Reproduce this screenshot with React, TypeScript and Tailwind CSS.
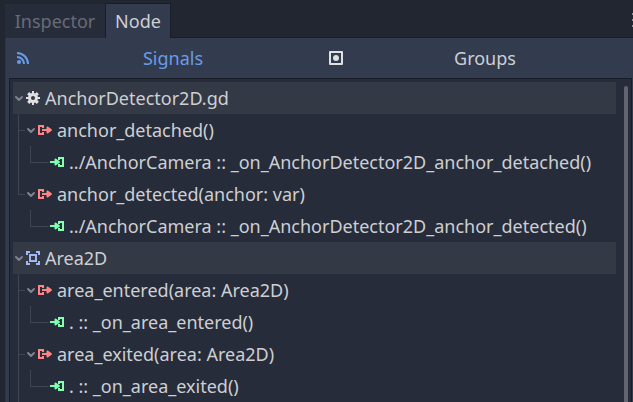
import React from "react";

const SignalsIcon = () => (
  <svg viewBox="0 0 16 16" className="size-4 shrink-0" fill="none" stroke="#699ce8" strokeWidth="2" aria-hidden="true">
    <circle cx="3" cy="12" r="2" fill="#699ce8" stroke="none" />
    <path d="M1 3a11 11 0 0 1 11 11" />
    <path d="M1 7a7 7 0 0 1 7 7" />
  </svg>
);

const GroupsIcon = () => (
  <svg viewBox="0 0 16 16" className="size-4 shrink-0" aria-hidden="true">
    <rect x="2" y="2" width="12" height="12" fill="none" stroke="#e0e0e0" strokeWidth="2" strokeLinejoin="round" />
    <circle cx="8" cy="8" r="3" fill="#e0e0e0" />
  </svg>
);

const GearIcon = () => (
  <svg viewBox="0 0 16 16" className="size-4 shrink-0" fill="#e0e0e0" aria-hidden="true">
    <path
      fillRule="evenodd"
      d="M7 1v2.1a5 5 0 0 0-1.2.5L4.3 2.1 2.1 4.3l1.5 1.5A5 5 0 0 0 3.1 7H1v2h2.1a5 5 0 0 0 .5 1.2l-1.5 1.5 2.2 2.2 1.5-1.5a5 5 0 0 0 1.2.5V15h2v-2.1a5 5 0 0 0 1.2-.5l1.5 1.5 2.2-2.2-1.5-1.5a5 5 0 0 0 .5-1.2H15V7h-2.1a5 5 0 0 0-.5-1.2l1.5-1.5-2.2-2.2-1.5 1.5A5 5 0 0 0 9 3.100V1zm1 5a2 2 0 1 1 0 4 2 2 0 0 1 0-4z"
    />
  </svg>
);

const AreaIcon = () => (
  <svg viewBox="0 0 16 16" className="size-4 shrink-0" fill="none" stroke="#a5b7f3" strokeWidth="2" aria-hidden="true">
    <path d="M2 5V2h3M11 2h3v3M14 11v3h-3M5 14H2v-3" />
    <rect x="5" y="5" width="6" height="6" />
  </svg>
);

const SignalIcon = () => (
  <svg viewBox="0 0 16 16" className="size-4 shrink-0" fill="#ff8484" aria-hidden="true">
    <path d="M1 3h6v3H5V5H3v6h2v-1h2v3H1z" />
    <path d="M5 7h5v2H5z" />
    <path d="M10.500 5.500L14 8l-3.500 2.500z" stroke="#ff8484" strokeWidth="2" strokeLinejoin="round" />
  </svg>
);

const SlotIcon = () => (
  <svg viewBox="0 0 16 16" className="size-4 shrink-0" fill="#84ffb1" aria-hidden="true">
    <path d="M9 3h6v10H9v-3h2v1h2V5h-2v1H9z" />
    <path d="M1 7h5v2H1z" />
    <path d="M6.500 5.500L10 8l-3.500 2.500z" stroke="#84ffb1" strokeWidth="2" strokeLinejoin="round" />
  </svg>
);

const Chevron = () => (
  <svg viewBox="0 0 12 12" className="size-3 shrink-0" fill="none" stroke="#7f838d" strokeWidth="2" aria-hidden="true">
    <path d="M3 5l3 3 3-3" strokeLinecap="round" strokeLinejoin="round" />
  </svg>
);

type Signal = { name: string; slot: string };
type Group = { name: string; icon: React.ReactNode; signals: Signal[]; more?: boolean };

const groups: Group[] = [
  {
    name: "AnchorDetector2D.gd",
    icon: <GearIcon />,
    signals: [
      { name: "anchor_detached()", slot: "../AnchorCamera :: _on_AnchorDetector2D_anchor_detached()" },
      { name: "anchor_detected(anchor: var)", slot: "../AnchorCamera :: _on_AnchorDetector2D_anchor_detected()" },
    ],
  },
  {
    name: "Area2D",
    icon: <AreaIcon />,
    more: true,
    signals: [
      { name: "area_entered(area: Area2D)", slot: ". :: _on_area_entered()" },
      { name: "area_exited(area: Area2D)", slot: ". :: _on_area_exited()" },
    ],
  },
];

const SignalItem = ({ signal, last }: { signal: Signal; last: boolean }) => (
  <li className="flex">
    <div className="flex w-[7px] shrink-0 flex-col">
      <div className="h-[17px] border-b border-l border-[#404552]" />
      <div className={last ? "" : "flex-1 border-l border-[#404552]"} />
    </div>
    <div className="min-w-0 flex-1">
      <button type="button" className="flex h-8 items-center whitespace-nowrap">
        <Chevron />
        <SignalIcon />
        <span className="ml-1">{signal.name}</span>
      </button>
      <div className="flex h-8 items-center pl-[5px]">
        <div className="h-[17px] w-[19px] shrink-0 self-start border-b border-l border-[#404552]" />
        <button type="button" className="flex items-center gap-1 whitespace-nowrap">
          <SlotIcon />
          <span>{signal.slot}</span>
        </button>
      </div>
    </div>
  </li>
);

export default function App() {
  return (
    <div className="flex h-screen flex-col overflow-hidden bg-[#222630] pl-[5px] pt-[3px] font-['Noto_Sans',sans-serif] text-[18px] leading-6 text-[#cdcfd2]">
      <header className="flex h-[35px] shrink-0">
        <div role="tablist" className="flex">
          <button type="button" role="tab" aria-selected="false" className="mt-px w-[100px] bg-[#272c3b] text-[#676b76]">
            Inspector
          </button>
          <button type="button" role="tab" aria-selected="true" className="w-[66px] border-x border-t border-[#191d27] bg-[#333b4f]">
            Node
          </button>
        </div>
        <div className="flex flex-1 justify-end border-b border-[#191d27]">
          <button type="button" aria-label="Dock options" className="flex w-px flex-col items-center gap-1 pt-[10px]">
            <span className="size-[2px] bg-[#8a8d94]" />
            <span className="size-[2px] bg-[#8a8d94]" />
            <span className="size-[2px] bg-[#8a8d94]" />
          </button>
        </div>
      </header>

      <main className="flex min-h-0 flex-1 flex-col border-l border-[#2d3446] bg-[#333b4f] pl-[3px]">
        <div className="flex h-10 shrink-0 gap-1 pr-1">
          <button type="button" className="flex flex-1 items-center px-[7px] text-[#699ce8]">
            <SignalsIcon />
            <span className="flex-1 pl-1">Signals</span>
          </button>
          <button type="button" className="flex flex-1 items-center px-[7px]">
            <GroupsIcon />
            <span className="flex-1 pl-1">Groups</span>
          </button>
        </div>

        <section className="mr-px flex min-h-0 flex-1 border-x border-t border-[#191d27] bg-[#272c3b] pl-[3px] pt-[3px]">
          <ul className="flex min-w-0 flex-1 flex-col">
            {groups.map((group) => (
              <li key={group.name}>
                <button type="button" className="flex h-8 w-full items-center bg-[#343946] text-left">
                  <Chevron />
                  {group.icon}
                  <span className="ml-1">{group.name}</span>
                </button>
                <ul className="pl-[5px]">
                  {group.signals.map((signal, i) => (
                    <SignalItem key={signal.name} signal={signal} last={!group.more && i === group.signals.length - 1} />
                  ))}
                </ul>
              </li>
            ))}
          </ul>
          <div className="flex w-[15px] shrink-0 justify-end pr-[3px] pt-1">
            <div className="w-1 rounded-t-sm bg-[#62656f]" />
          </div>
        </section>
      </main>
    </div>
  );
}
